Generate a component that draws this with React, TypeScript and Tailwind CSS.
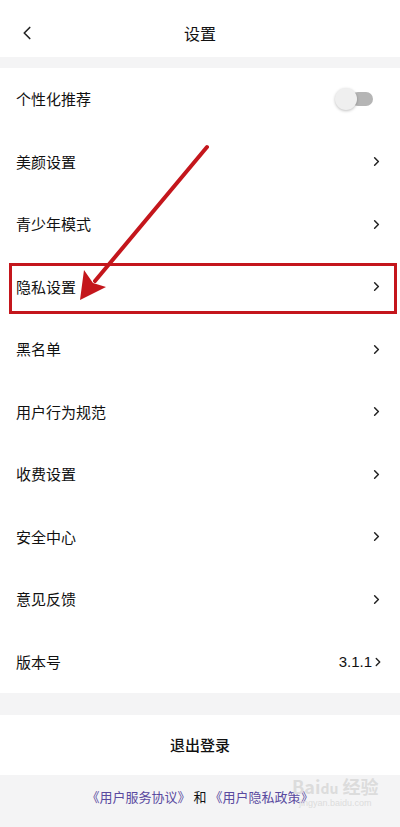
import { ChevronRight, ChevronLeft } from 'lucide-react';

const ROWS = ['美颜设置', '青少年模式', '隐私设置', '黑名单', '用户行为规范', '收费设置', '安全中心', '意见反馈'];

function Row({ label, right }: { label: string; right?: React.ReactNode }) {
  return (
    <div className="h-[62.5px] flex items-center justify-between pl-4 pr-[16px]">
      <span className="text-[15px] text-[#111]">{label}</span>
      {right ?? <ChevronRight size={15} strokeWidth={2.4} className="text-[#222]" />}
    </div>
  );
}

export default function App() {
  return (
    <div
      className="relative w-[400px] h-[827px] overflow-hidden bg-[#f4f4f5]"
      style={{ fontFamily: '"Noto Sans CJK SC", "Noto Sans", sans-serif' }}
    >
      {/* Header */}
      <div className="h-[57px] bg-white flex items-center relative pt-[9px]">
        <ChevronLeft size={22} strokeWidth={1.8} className="ml-[16px] text-[#222]" />
        <span className="absolute left-0 right-0 text-center text-[16px] text-[#111] pointer-events-none">设置</span>
      </div>

      <div className="h-[11px]" />

      {/* Settings list */}
      <div className="bg-white">
        <Row
          label="个性化推荐"
          right={
            <div className="relative w-[38px] h-[24px] flex items-center mr-[11px]">
              <div className="absolute right-0 w-[22px] h-[14px] rounded-full bg-[#b5b5b5]" />
              <div className="absolute left-0 w-[22px] h-[22px] rounded-full bg-[#efefef] shadow-[0_1px_3px_rgba(0,0,0,0.25)]" />
            </div>
          }
        />
        {ROWS.map((r) => <Row key={r} label={r} />)}
        <Row
          label="版本号"
          right={
            <div className="flex items-center -mr-[1px]">
              <span className="text-[15px] text-[#111]" style={{ fontFamily: '"Liberation Sans", sans-serif' }}>3.1.1</span>
              <ChevronRight size={14} strokeWidth={2.4} className="text-[#222] -ml-[1px]" />
            </div>
          }
        />
      </div>

      <div className="h-[22px]" />

      {/* Logout */}
      <div className="h-[60px] bg-white flex items-center justify-center">
        <span className="text-[15px] font-medium text-[#111]">退出登录</span>
      </div>

      {/* Footer links */}
      <div className="pt-[12px] flex items-center justify-center text-[13px]">
        <span className="text-[#5a4aa0]">《用户服务协议》</span>
        <span className="text-[#111] mx-[3px]">和</span>
        <span className="text-[#5a4aa0]">《用户隐私政策》</span>
      </div>

      {/* Annotation: red box */}
      <div className="absolute left-[9px] top-[263px] w-[388px] h-[51px] border-[3px] border-[#c4161c] pointer-events-none" />

      {/* Annotation: arrow */}
      <svg className="absolute left-0 top-0 pointer-events-none" width="400" height="827" viewBox="0 0 400 827">
        <line x1="207" y1="147" x2="95" y2="281" stroke="#c4161c" strokeWidth="4" strokeLinecap="round" />
        <polygon points="80,300 84,270 93,283 106,287" fill="#c4161c" />
      </svg>

      {/* Watermark */}
      <div className="absolute left-[292px] top-[777px] flex flex-col items-center text-[#dcdcdc] pointer-events-none whitespace-nowrap">
        <span className="text-[18px] font-bold leading-none">Bai<span className="text-[14px]">du</span> 经验</span>
        <span className="text-[9px] leading-tight mt-[3px]" style={{ fontFamily: '"Liberation Sans", sans-serif' }}>jingyan.baidu.com</span>
      </div>
    </div>
  );
}
